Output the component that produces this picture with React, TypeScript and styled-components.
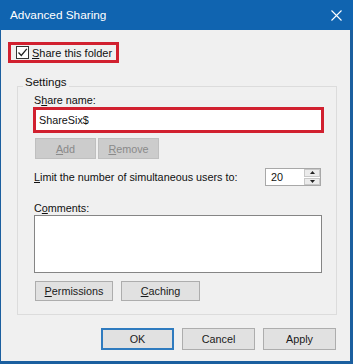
import React from "react";
import styled, { createGlobalStyle } from "styled-components";

const Global = createGlobalStyle`
  html, body { margin: 0; padding: 0; background: #ffffff; }
  body { font-family: "Liberation Sans", Arial, sans-serif; color: #111; }
  * { box-sizing: border-box; }
`;

const BLUE = "#1064b0";
const EDGE = "#1b5f9f";

const Window = styled.div`
  width: 353px;
  height: 364px;
  display: flex;
  flex-direction: column;
  white-space: nowrap;
`;

const TitleBar = styled.div`
  height: 30px;
  flex: none;
  background: ${BLUE};
  display: flex;
  align-items: center;
  justify-content: space-between;
  padding: 0 11px 0 10px;
  color: #ffffff;
  font-size: 11.8px;
`;

const Frame = styled.div`
  flex: 1;
  background: #f0f0f0;
  border-left: 1px solid ${EDGE};
  border-right: 3px solid ${EDGE};
  border-bottom: 3px solid ${EDGE};
  display: flex;
  flex-direction: column;
  padding: 12px 0 0 7px;
  font-size: 10.8px;
`;

const Highlight = styled.div`
  align-self: flex-start;
  width: 111px;
  height: 21px;
  border: 3px solid #d1202f;
  display: flex;
  align-items: center;
  padding-left: 5px;
  gap: 3px;
  font-size: 11px;
`;

const CheckBox = styled.span`
  flex: none;
  width: 13px;
  height: 13px;
  border: 1px solid #333;
  background: #fff;
  display: flex;
  align-items: center;
  justify-content: center;
`;

const Key = styled.u`
  text-decoration: underline;
  text-underline-offset: 1px;
`;

const Group = styled.div`
  position: relative;
  margin: 23px 0 0 9px;
  width: 320px;
  border: 1px solid #dcdcdc;
  padding: 6px 0 13px 16px;
  display: flex;
  flex-direction: column;
  align-items: flex-start;
`;

const Legend = styled.span`
  position: absolute;
  top: -13px;
  left: 5px;
  padding: 0 2px;
  line-height: 16px;
  background: #f0f0f0;
  font-size: 11.5px;
`;

const Label = styled.div<{ $gap?: number }>`
  line-height: 14px;
  margin-top: ${(p) => p.$gap ?? 0}px;
`;

const TextBox = styled.div`
  margin-left: -1px;
  width: 291px;
  height: 26px;
  border: 3px solid #d1202f;
  background: #ffffff;
  padding-left: 3px;
  display: flex;
  align-items: center;
`;

const ButtonRow = styled.div<{ $gap: number; $top: number }>`
  display: flex;
  gap: ${(p) => p.$gap}px;
  margin: ${(p) => p.$top}px 0 0 1px;
`;

const Button = styled.div<{ $w: number; $h: number; $disabled?: boolean; $default?: boolean }>`
  width: ${(p) => p.$w}px;
  height: ${(p) => p.$h}px;
  display: flex;
  align-items: center;
  justify-content: center;
  background: ${(p) => (p.$disabled ? "#cccccc" : "#e1e1e1")};
  border: ${(p) =>
    p.$default ? "2px solid #2f7bbf" : p.$disabled ? "1px solid #bfbfbf" : "1px solid #adadad"};
  color: ${(p) => (p.$disabled ? "#8a8a8a" : "#1a1a1a")};
`;

const LimitRow = styled.div`
  margin-top: 9px;
  width: 287px;
  display: flex;
  align-items: center;
  justify-content: space-between;
`;

const Spin = styled.div`
  width: 56px;
  height: 18px;
  border: 1px solid #a8a8a8;
  background: #fff;
  display: flex;
  align-items: stretch;
`;

const SpinValue = styled.span`
  flex: 1;
  padding-left: 5px;
  display: flex;
  align-items: center;
`;

const SpinButtons = styled.div`
  width: 16px;
  display: flex;
  flex-direction: column;
  gap: 1px;
`;

const SpinButton = styled.div`
  flex: 1;
  background: #ebebeb;
  border: 1px solid #c8c8c8;
  display: flex;
  align-items: center;
  justify-content: center;
`;

const TextArea = styled.div`
  width: 288px;
  height: 58px;
  border: 1px solid #858585;
  background: #ffffff;
`;

const Footer = styled.div`
  margin-top: 13px;
  display: flex;
  justify-content: flex-end;
  gap: 8px;
  padding-right: 14px;
`;

export default function App() {
  return (
    <>
      <Global />
      <Window>
        <TitleBar>
          <span>Advanced Sharing</span>
          <svg width="11" height="11" viewBox="0 0 11 11">
            <path d="M0.5 0.5 L10.5 10.5 M10.5 0.5 L0.5 10.5" stroke="#fff" strokeWidth="1.1" />
          </svg>
        </TitleBar>
        <Frame>
          <Highlight>
            <CheckBox>
              <svg width="11" height="11" viewBox="0 0 11 11">
                <path d="M1.5 5.5 L4.3 8.5 L9.8 1.8" fill="none" stroke="#222" strokeWidth="1.3" />
              </svg>
            </CheckBox>
            <span>
              <Key>S</Key>hare this folder
            </span>
          </Highlight>
          <Group>
            <Legend>Settings</Legend>
            <Label>
              S<Key>h</Key>are name:
            </Label>
            <TextBox>ShareSix$</TextBox>
            <ButtonRow $gap={2} $top={5}>
              <Button $w={61} $h={21} $disabled>
                <span>
                  <Key>A</Key>dd
                </span>
              </Button>
              <Button $w={61} $h={21} $disabled>
                <span>
                  <Key>R</Key>emove
                </span>
              </Button>
            </ButtonRow>
            <LimitRow>
              <span>
                <Key>L</Key>imit the number of simultaneous users to:
              </span>
              <Spin>
                <SpinValue>20</SpinValue>
                <SpinButtons>
                  <SpinButton>
                    <svg width="5" height="3" viewBox="0 0 5 3">
                      <path d="M0 3 L2.5 0 L5 3 Z" fill="#222" />
                    </svg>
                  </SpinButton>
                  <SpinButton>
                    <svg width="5" height="3" viewBox="0 0 5 3">
                      <path d="M0 0 L2.5 3 L5 0 Z" fill="#222" />
                    </svg>
                  </SpinButton>
                </SpinButtons>
              </Spin>
            </LimitRow>
            <Label $gap={15}>
              C<Key>o</Key>mments:
            </Label>
            <TextArea />
            <ButtonRow $gap={8} $top={8}>
              <Button $w={78} $h={20}>
                <span>
                  <Key>P</Key>ermissions
                </span>
              </Button>
              <Button $w={79} $h={20}>
                <span>
                  <Key>C</Key>aching
                </span>
              </Button>
            </ButtonRow>
          </Group>
          <Footer>
            <Button $w={73} $h={22} $default>
              OK
            </Button>
            <Button $w={73} $h={22}>
              Cancel
            </Button>
            <Button $w={73} $h={22}>
              Apply
            </Button>
          </Footer>
        </Frame>
      </Window>
    </>
  );
}
